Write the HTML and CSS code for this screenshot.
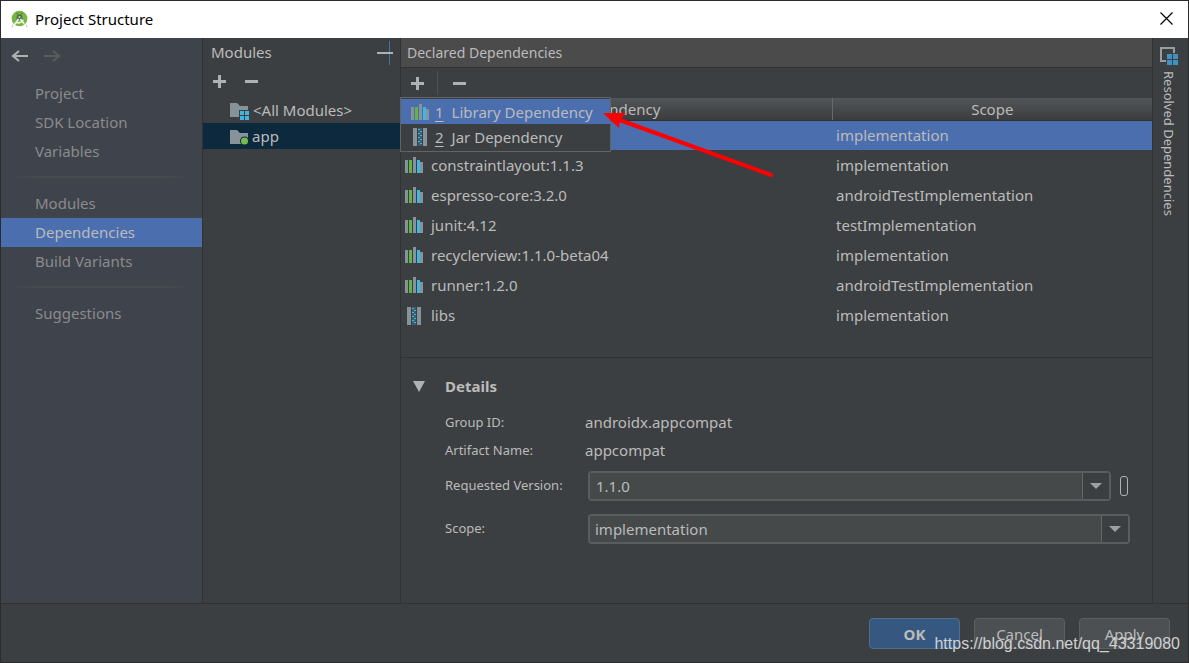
FILE: index.html
```html
<!DOCTYPE html>
<html lang="en">
<head>
<meta charset="utf-8">
<title>Project Structure</title>
<link rel="stylesheet" href="styles.css">
</head>
<body>
<svg class="defs" aria-hidden="true">
  <symbol id="lib" viewBox="0 0 18 16">
    <path fill="#87939a" d="M0 3h3v13H0zM8 1h3v14H8zM15 5h3v11h-3z"/>
    <path fill="#87939a" d="M8 0h3v16H8z"/>
    <path fill="#62b543" d="M4 3h3v13H4z"/>
    <path fill="#40b6e0" d="M12 3h3v13h-3z"/>
  </symbol>
  <symbol id="jar" viewBox="0 0 14 18">
    <path fill="#87939a" d="M0 0h4v18H0zM10 0h4v18h-4z"/>
    <path fill="#3c5f70" d="M5 0h4v18H5z"/>
    <path stroke="#40b6e0" stroke-width="1" fill="none" d="M5 1.500h2M7 3.500h2M5 5.500h2M7 7.500h2M5 9.500h2M7 11.500h2M5 13.500h2M7 15.500h2"/>
  </symbol>
  <symbol id="plus" viewBox="0 0 13 13"><path fill="#afb1b3" d="M5 0h3v5h5v3H8v5H5V8H0V5h5z"/></symbol>
  <symbol id="minus" viewBox="0 0 13 13"><path fill="#afb1b3" d="M0 5h13v3H0z"/></symbol>
</svg>
<div class="window">
  <header class="titlebar">
    <svg class="logo" viewBox="0 0 18 18" aria-hidden="true">
      <circle cx="9" cy="8.500" r="8.300" fill="#78b543"/>
      <path d="M7 4 6 2.500M11 4l1-1.500" stroke="#3c5c35" />
      <path d="M6 7a3 3 0 0 1 6 0v3H6z" fill="#55694f"/>
      <circle cx="9" cy="7" r="1.200" fill="#b7d99d"/>
      <path d="m8 9-5 7M10 9l4 5M5 12q4 3 8-2" fill="none" stroke="#eef4ea" stroke-width="1.800"/>
      <path d="m2 15-1 3M16 15l1 3" stroke="#bfc5bd"/>
    </svg>
    <h1>Project Structure</h1>
    <button class="close" aria-label="Close"><svg width="13" height="13" viewBox="0 0 13 13"><path d="m.5.500 12 12m0-12-12 12" stroke="#000" stroke-width="1.200"/></svg></button>
  </header>
  <div class="content">
    <nav class="sidebar">
      <div class="history">
        <button aria-label="Back"><svg width="17" height="14" viewBox="0 0 17 14"><path d="M17 7H2m6-5L2 7l6 5" fill="none" stroke="#afb1b3" stroke-width="2.200"/></svg></button>
        <button aria-label="Forward" disabled><svg width="17" height="14" viewBox="0 0 17 14"><path d="M0 7h15M9 2l6 5-6 5" fill="none" stroke="#5a5b5d" stroke-width="2.200"/></svg></button>
      </div>
      <a href="#">Project</a>
      <a href="#">SDK Location</a>
      <a href="#">Variables</a>
      <hr>
      <a href="#">Modules</a>
      <a href="#" class="current" aria-current="page">Dependencies</a>
      <a href="#">Build Variants</a>
      <hr>
      <a href="#">Suggestions</a>
    </nav>
    <section class="modules">
      <div class="modules-head">
        <h2>Modules</h2>
        <button aria-label="Hide"><svg width="16" height="26" viewBox="0 0 16 26"><path d="M12.500 2v24" stroke="#4b6eaf"/><path d="M0 13h16v2H0z" fill="#afb1b3"/></svg></button>
      </div>
      <div class="modules-tools">
        <button aria-label="Add module"><svg width="13" height="13"><use href="#plus"/></svg></button>
        <button aria-label="Remove module"><svg width="13" height="13"><use href="#minus"/></svg></button>
      </div>
      <ul>
        <li><svg width="20" height="18" viewBox="0 0 20 18"><path fill="#87939a" d="M0 2h7l3 3h8v4H9v7H0z"/><path fill="#40b6e0" d="M10 10h4v4h-4zM15 10h4v4h-4zM10 15h4v4h-4zM15 15h4v4h-4z"/></svg>&lt;All Modules&gt;</li>
        <li class="picked"><svg width="20" height="18" viewBox="0 0 20 18"><path fill="#87939a" d="M0 3h7l3 3h8v11H0z"/><circle cx="14.500" cy="14" r="4.500" fill="#0d293e"/><circle cx="14.500" cy="14" r="3.500" fill="#73bd4f"/></svg>app</li>
      </ul>
    </section>
    <main class="declared">
      <h2>Declared Dependencies</h2>
      <div class="tools">
        <button aria-label="Add dependency"><svg width="13" height="13"><use href="#plus"/></svg></button>
        <span class="rule"></span>
        <button aria-label="Remove dependency"><svg width="13" height="13"><use href="#minus"/></svg></button>
        <div class="popup" role="menu">
          <button role="menuitem" class="active"><svg class="lib" width="18" height="16"><use href="#lib"/></svg><u>1</u>Library Dependency</button>
          <button role="menuitem"><svg class="jar" width="14" height="18"><use href="#jar"/></svg><u>2</u>Jar Dependency</button>
        </div>
        <svg class="pointer" width="172" height="68" viewBox="0 0 172 68" aria-hidden="true"><path d="m15 10 154 56" stroke="#f00" stroke-width="4" stroke-linecap="round"/><path d="m1 4 23 0-6 6-1 9z" fill="#f00"/></svg>
      </div>
      <table>
        <thead><tr><th>Dependency</th><th>Scope</th></tr></thead>
        <tbody>
          <tr class="chosen"><td></td><td>implementation</td></tr>
          <tr><td><svg class="lib" width="18" height="16"><use href="#lib"/></svg>constraintlayout:1.1.3</td><td>implementation</td></tr>
          <tr><td><svg class="lib" width="18" height="16"><use href="#lib"/></svg>espresso-core:3.2.0</td><td>androidTestImplementation</td></tr>
          <tr><td><svg class="lib" width="18" height="16"><use href="#lib"/></svg>junit:4.12</td><td>testImplementation</td></tr>
          <tr><td><svg class="lib" width="18" height="16"><use href="#lib"/></svg>recyclerview:1.1.0-beta04</td><td>implementation</td></tr>
          <tr><td><svg class="lib" width="18" height="16"><use href="#lib"/></svg>runner:1.2.0</td><td>androidTestImplementation</td></tr>
          <tr><td><svg class="jar" width="14" height="18"><use href="#jar"/></svg>libs</td><td>implementation</td></tr>
        </tbody>
      </table>
      <section class="details">
        <h3><svg width="12" height="11" viewBox="0 0 12 11"><path d="M0 0h12L6 11z" fill="#afb1b3"/></svg>Details</h3>
        <div class="fields">
          <span class="label">Group ID:</span><span class="value">androidx.appcompat</span>
          <span class="label">Artifact Name:</span><span class="value">appcompat</span>
          <label class="label tall" for="version">Requested Version:</label>
          <div class="control tall">
            <div class="combo"><input id="version" value="1.1.0"><button class="drop" aria-label="Show versions"><svg width="12" height="6"><path d="M0 0h12L6 6z" fill="#9da0a2"/></svg></button></div>
            <button class="attach" aria-label="Bind to variable"></button>
          </div>
          <label class="label tall" for="scope">Scope:</label>
          <div class="control tall">
            <div class="combo"><select id="scope"><option>implementation</option></select><span class="drop"><svg width="12" height="6"><path d="M0 0h12L6 6z" fill="#9da0a2"/></svg></span></div>
          </div>
        </div>
      </section>
    </main>
    <aside class="strip">
      <button><svg width="18" height="18" viewBox="0 0 18 18"><path d="M6 14H1V1h13v5" fill="none" stroke="#9a9da0" stroke-width="2"/><path d="M7 7h5v5H7zM13 7h5v5h-5zM7 13h5v5H7zM13 13h5v5h-5z" fill="#3f92c2"/></svg><span>Resolved Dependencies</span></button>
    </aside>
  </div>
  <footer class="actions">
    <button class="primary">OK</button>
    <button>Cancel</button>
    <button>Apply</button>
    <span class="watermark">https://blog.csdn.net/qq_43319080</span>
  </footer>
</div>
</body>
</html>
```
FILE: styles.css
```css
* { box-sizing: border-box; }
body {
  margin: 0;
  background: #3c3f41;
  color: #bbbbbb;
  font: 15px/20px "Noto Sans", "Open Sans", sans-serif;
}
button, input, select { font: inherit; color: inherit; }
button { border: 0; padding: 0; background: none; }
svg { display: block; flex: none; }
h1, h2, h3, ul { margin: 0; padding: 0; font-weight: normal; font-size: inherit; }
.defs { position: absolute; width: 0; height: 0; }
.window {
  display: flex;
  flex-direction: column;
  min-height: 100vh;
  border: 1px solid #2b2b2b;
}

.titlebar {
  display: flex;
  align-items: center;
  gap: 7px;
  height: 37px;
  padding: 0 15px 2px 10px;
  background: #fff;
  color: #000;
}
.logo { width: 17px; height: 18px; }
.close { margin-left: auto; }

.content { display: flex; flex: 1; }
.sidebar {
  width: 202px;
  border-right: 1px solid #323232;
  background: #3f434c;
  color: #8a8b8d;
}
.history { display: flex; gap: 16px; padding: 11px 10px 16px; }
.sidebar a {
  display: block;
  padding: 4px 34px 5px;
  color: inherit;
  text-decoration: none;
}
.sidebar a.current { background: #4b6eaf; color: #bbbbbb; }
.sidebar hr {
  height: 2px;
  margin: 10px 12px 11px;
  border: 0;
  background: linear-gradient(to right, transparent, #4a4b4f 15%, #4a4b4f 85%, transparent);
}

.modules { width: 197px; }
.modules-head { display: flex; justify-content: space-between; padding: 1px 7px 0 8px; }
.modules-head h2 { padding-top: 3px; }
.modules-tools { display: flex; gap: 19px; padding: 10px 10px 9px; }
.modules ul { list-style: none; }
.modules li {
  display: flex;
  align-items: center;
  gap: 3px;
  height: 26px;
  padding-left: 27px;
}
.modules svg { overflow: visible; }
.modules .picked { background: #0d293e; gap: 2px; }

.declared { flex: 1; border-left: 1px solid #323232; }
.declared h2 {
  padding: 5px 6px 4px;
  border-bottom: 1px solid #323232;
  background: #4b4b4b;
  font-size: 14px;
}
.tools {
  position: relative;
  display: flex;
  align-items: center;
  height: 30px;
  padding-left: 10px;
}
.rule { width: 1px; height: 24px; margin: 0 15px 0 13px; background: #515151; }
.popup {
  position: absolute;
  z-index: 1;
  top: 29px;
  left: -1px;
  width: 211px;
  padding: 1px 0 2px;
  border: 1px solid #616365;
  background: #3c3f41;
}
.popup button {
  display: flex;
  align-items: center;
  width: 100%;
  height: 25px;
  padding-left: 10px;
  white-space: nowrap;
}
.popup .active { background: #4b6eaf; }
.popup svg { margin-right: 6px; }
.popup .jar { margin: 0 8px 0 2px; }
.popup u { margin-right: 8px; text-underline-offset: 3px; }
.pointer { position: absolute; z-index: 2; top: 41px; left: 201px; }

table { width: 100%; border-collapse: collapse; table-layout: fixed; }
th {
  height: 22px;
  padding: 2px 0 0;
  border-bottom: 1px solid #323232;
  background: linear-gradient(#525658, #3a3c3e);
  font-weight: normal;
  line-height: 19px;
}
th:first-child { width: 57.4%; border-right: 1px solid #67696b; }
td { height: 30px; padding: 0 4px; }
td svg { display: inline-block; margin-right: 8px; vertical-align: -2px; }
td .jar { margin: 0 10px 0 2px; vertical-align: -4px; }
.chosen { background: #4b6eaf; }

.details { margin-top: 27px; border-top: 1px solid #323232; padding: 18px 22px 50px 12px; }
.details h3 { display: flex; align-items: center; gap: 20px; font-weight: bold; }
.fields {
  display: grid;
  grid-template-columns: 140px 1fr;
  align-items: center;
  padding: 12px 0 0 32px;
}
.fields > * { min-height: 28px; line-height: 28px; }
.label { font-size: 13px; }
.fields .tall { min-height: 43px; line-height: 43px; }
.control { display: flex; align-items: center; gap: 9px; padding-left: 3px; }
.combo {
  position: relative;
  display: flex;
  flex: 1;
  height: 30px;
  border: 2px solid #5a5d5e;
  border-radius: 4px;
  background: #45494a;
  line-height: 20px;
}
.combo input, .combo select {
  flex: 1;
  min-width: 0;
  border: 0;
  padding: 0 6px;
  outline: 0;
  appearance: none;
  background: #45494a;
}
.combo select { padding: 0 5px; }
.drop {
  display: flex;
  align-items: center;
  justify-content: center;
  width: 27px;
  border-left: 1px solid #646667;
  background: #3c3f41;
  pointer-events: none;
}
.attach { width: 8px; height: 20px; margin-right: 2px; border: 1px solid #afb1b3; border-radius: 3px; }

.strip { width: 36px; border-left: 1px solid #323232; padding: 9px 7px; }
.strip button { display: flex; flex-direction: column; gap: 6px; align-items: center; }
.strip span { writing-mode: vertical-rl; font-size: 13px; line-height: 18px; }

.actions {
  position: relative;
  display: flex;
  justify-content: flex-end;
  gap: 14px;
  padding: 14px 18px 13px;
  border-top: 1px solid #323232;
}
.actions button {
  width: 91px;
  height: 31px;
  border: 1px solid #5e6060;
  border-radius: 4px;
  background: #4c5052;
}
.actions .primary { border-color: #4c708c; background: #365880; font-weight: bold; }
.watermark {
  position: absolute;
  right: 8px;
  bottom: 8px;
  color: #d0d1d2;
  font: 16px/20px "Liberation Sans", Arial, sans-serif;
}
```
